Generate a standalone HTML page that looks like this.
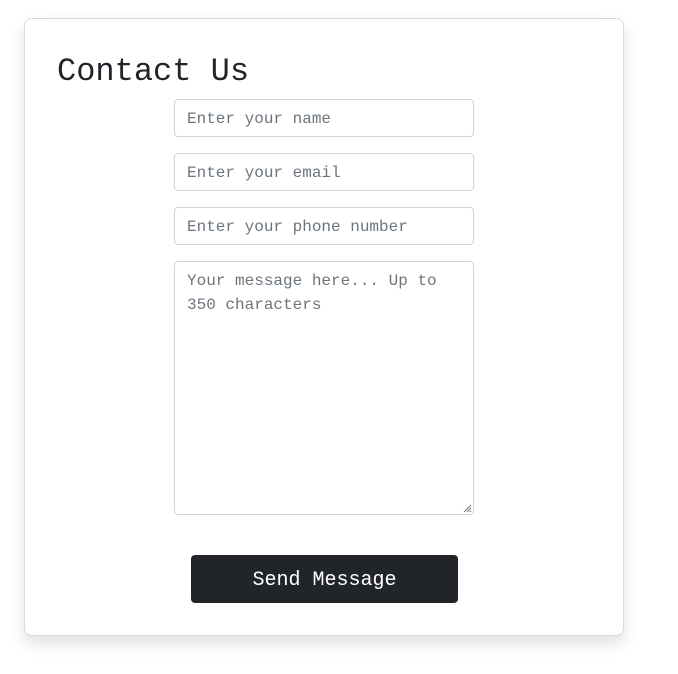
<!DOCTYPE html>
<html><head><style>
body{margin:0;background:#fff;width:678px;height:674px;position:relative;font-family:"Liberation Mono",monospace;}
.card{position:absolute;left:24px;top:18px;width:598px;height:616px;border:1px solid #d5d8de;border-radius:8px;box-shadow:0 8px 16px rgba(0,0,0,0.12);background:#fff;}
h1{position:absolute;left:57px;top:52px;margin:0;font-size:32px;font-weight:normal;color:#212529;line-height:40px;}
.in{position:absolute;left:174px;border:1px solid #ced4da;border-radius:4px;box-sizing:border-box;width:300px;color:#6c757d;font-size:16px;padding:0 12px;}
.btn{position:absolute;left:191px;top:555px;width:267px;height:48px;background:#212529;border-radius:4px;color:#fff;font-size:20px;text-align:center;line-height:52px;}
</style></head><body>
<div class="card"></div>
<h1>Contact Us</h1>
<div class="in" style="top:99px;height:38px;line-height:38px">Enter your name</div>
<div class="in" style="top:153px;height:38px;line-height:38px">Enter your email</div>
<div class="in" style="top:207px;height:38px;line-height:38px">Enter your phone number</div>
<div class="in" style="top:261px;height:254px;line-height:24px;padding-top:7px">Your message here... Up to 350 characters
<svg style="position:absolute;right:1px;bottom:1px" width="10" height="10"><path d="M9 2L2 9M9 5L5 9M9 8L8 9" stroke="#777" stroke-width="1"/></svg></div>
<div class="btn">Send Message</div>
</body></html>
